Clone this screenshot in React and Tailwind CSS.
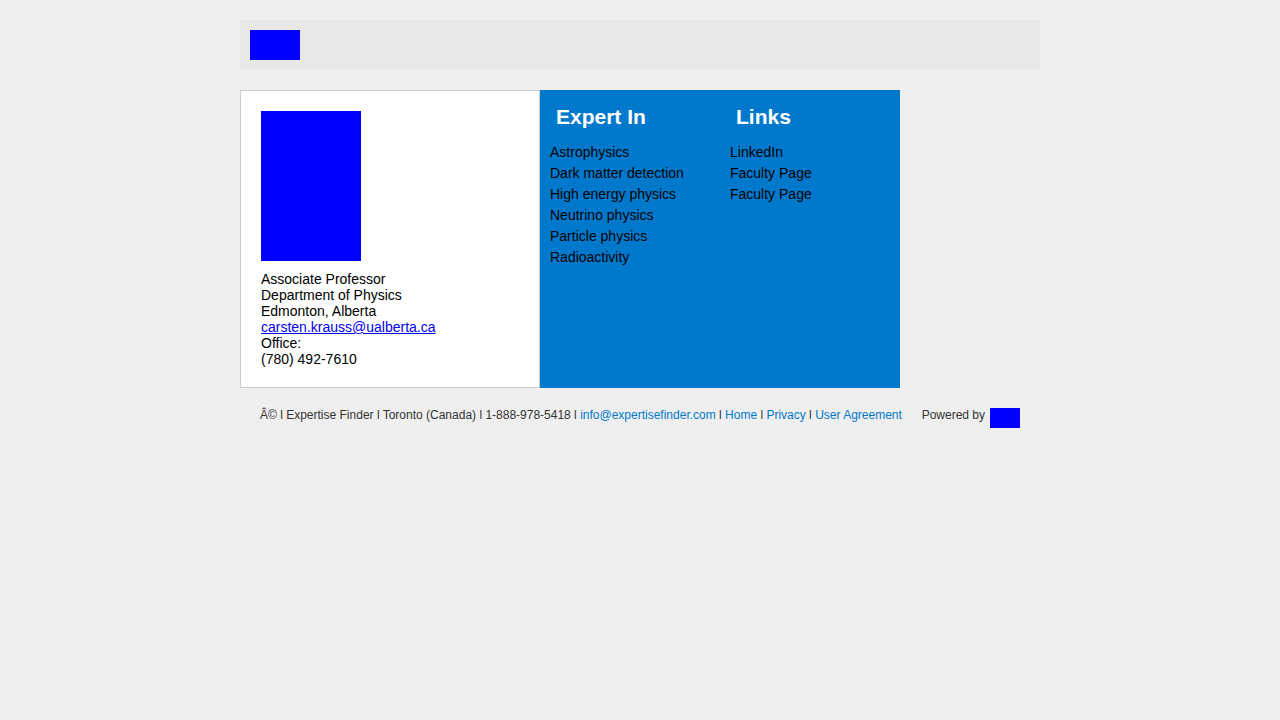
import React from 'react'

const EXPERTISE = [
  'Astrophysics',
  'Dark matter detection',
  'High energy physics',
  'Neutrino physics',
  'Particle physics',
  'Radioactivity',
]

const LINKS = ['LinkedIn', 'Faculty Page', 'Faculty Page']

function Column({ title, items }) {
  return (
    <div className="w-[180px] px-[10px]">
      <h2 className="pl-[6px] pt-[15px] text-[21px] font-bold leading-[24px] text-white">{title}</h2>
      <ul className="mt-[13px]">
        {items.map((item, i) => (
          <li key={i} className="text-[14px] leading-[21px] text-black">
            {item}
          </li>
        ))}
      </ul>
    </div>
  )
}

export default function App() {
  return (
    <div
      className="min-h-screen bg-[#efefef] pt-[20px]"
      style={{ fontFamily: '"Liberation Sans", Arial, sans-serif' }}
    >
      <div className="mx-auto w-[800px]">
        <header className="h-[50px] bg-[#e8e8e8] p-[10px]">
          <div className="h-[30px] w-[50px] bg-[#0000ff]" />
        </header>

        <main className="mt-[20px] flex">
          <section className="w-[300px] border border-[#cccccc] bg-white px-[20px] pb-[20px] pt-[20px] text-[14px] leading-[16px] text-black">
            <div className="h-[150px] w-[100px] bg-[#0000ff]" />
            <div className="mt-[10px]">
              <p>Associate Professor</p>
              <p>Department of Physics</p>
              <p>Edmonton, Alberta</p>
              <a href="#" className="text-[#0000ee] underline">
                carsten.krauss@ualberta.ca
              </a>
              <p>Office:</p>
              <p>(780) 492-7610</p>
            </div>
          </section>

          <section className="flex w-[360px] bg-[#0079cc]">
            <Column title="Expert In" items={EXPERTISE} />
            <Column title="Links" items={LINKS} />
          </section>
        </main>

        <footer className="flex items-center px-[20px] pt-[14px] text-[12px] text-[#333333]">
          <p>
            Â© l Expertise Finder l Toronto (Canada) l 1-888-978-5418 l{' '}
            <a href="#" className="text-[#0079cc]">info@expertisefinder.com</a> l{' '}
            <a href="#" className="text-[#0079cc]">Home</a> l{' '}
            <a href="#" className="text-[#0079cc]">Privacy</a> l{' '}
            <a href="#" className="text-[#0079cc]">User Agreement</a>
          </p>
          <div className="ml-auto flex items-center gap-[5px]">
            <span>Powered by</span>
            <div className="mt-[6px] h-[20px] w-[30px] bg-[#0000ff]" />
          </div>
        </footer>
      </div>
    </div>
  )
}
